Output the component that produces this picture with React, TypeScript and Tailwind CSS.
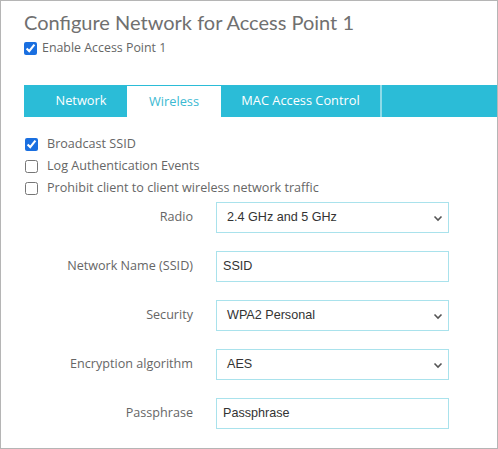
import { useState } from "react";

const fields = [
  { label: "Radio", value: "2.4 GHz and 5 GHz", select: true },
  { label: "Network Name (SSID)", value: "SSID", select: false },
  { label: "Security", value: "WPA2 Personal", select: true },
  { label: "Encryption algorithm", value: "AES", select: true },
  { label: "Passphrase", value: "Passphrase", select: false },
];

const options = [
  { label: "Broadcast SSID", checked: true },
  { label: "Log Authentication Events", checked: false },
  { label: "Prohibit client to client wireless network traffic", checked: false },
];

const tabs = [
  { name: "Network", width: "w-[92px]" },
  { name: "Wireless", width: "w-[94px]" },
  { name: "MAC Access Control", width: "w-[159px]" },
];

export default function App() {
  const [tab, setTab] = useState("Wireless");

  return (
    <div
      className="h-[449px] w-[498px] border border-[#b5b5b5] bg-white pl-[23px] pt-[9px] text-[#666]"
      style={{ fontFamily: "'Open Sans', sans-serif" }}
    >
      <h1
        className="h-[24px] text-[20px] leading-[24px] font-normal text-[#707070]"
        style={{ fontFamily: "Lato, sans-serif" }}
      >
        Configure Network for Access Point 1
      </h1>

      <label className="mt-[5px] flex h-[18px] items-center gap-[5px] text-[12.4px]">
        <input type="checkbox" defaultChecked className="m-0 h-[13px] w-[13px] accent-[#1a6fe0]" />
        <span>Enable Access Point 1</span>
      </label>

      <div className="mt-[28px] flex h-[32px] bg-[#2bbcd7] pl-[11px] text-[12.8px]">
        {tabs.map((item) => (
          <button
            key={item.name}
            type="button"
            onClick={() => setTab(item.name)}
            className={
              tab === item.name
                ? `h-full ${item.width} border-t border-[#2bbcd7] bg-white text-center text-[#3bb9d2]`
                : `h-full ${item.width} text-center text-white`
            }
          >
            {item.name}
          </button>
        ))}
        <div className="w-[2px] bg-[#8fdbe8]" />
      </div>

      <div className="mt-[16px] text-[12.6px]">
        {options.map((item) => (
          <label key={item.label} className="flex h-[22px] items-center gap-[9px] pl-[1px]">
            <input
              type="checkbox"
              defaultChecked={item.checked}
              className="m-0 h-[13px] w-[13px] accent-[#1a6fe0]"
            />
            <span>{item.label}</span>
          </label>
        ))}
      </div>

      <div className="mt-[3px] flex flex-col gap-[18px]">
        {fields.map((field) => (
          <div key={field.label} className="flex h-[31px] items-center">
            <span className="w-[170px] pr-[1px] text-right text-[12.6px]">{field.label}</span>
            <div
              className="relative ml-[22px] flex h-[31px] w-[233px] items-center border border-[#a9e2ec] bg-white text-[12.6px] text-[#333]"
              style={{ fontFamily: "'Liberation Sans', Arial, sans-serif" }}
            >
              <span className={field.select ? "pl-[10px]" : "pl-[6px]"}>{field.value}</span>
              {field.select ? (
                <svg
                  className="absolute right-[5px] top-[12px]"
                  width="10"
                  height="7"
                  viewBox="0 0 10 7"
                  fill="none"
                  stroke="#555"
                  strokeWidth="1.6"
                >
                  <path d="M1.5 1.5 5 5 8.5 1.5" />
                </svg>
              ) : null}
            </div>
          </div>
        ))}
      </div>
    </div>
  );
}
